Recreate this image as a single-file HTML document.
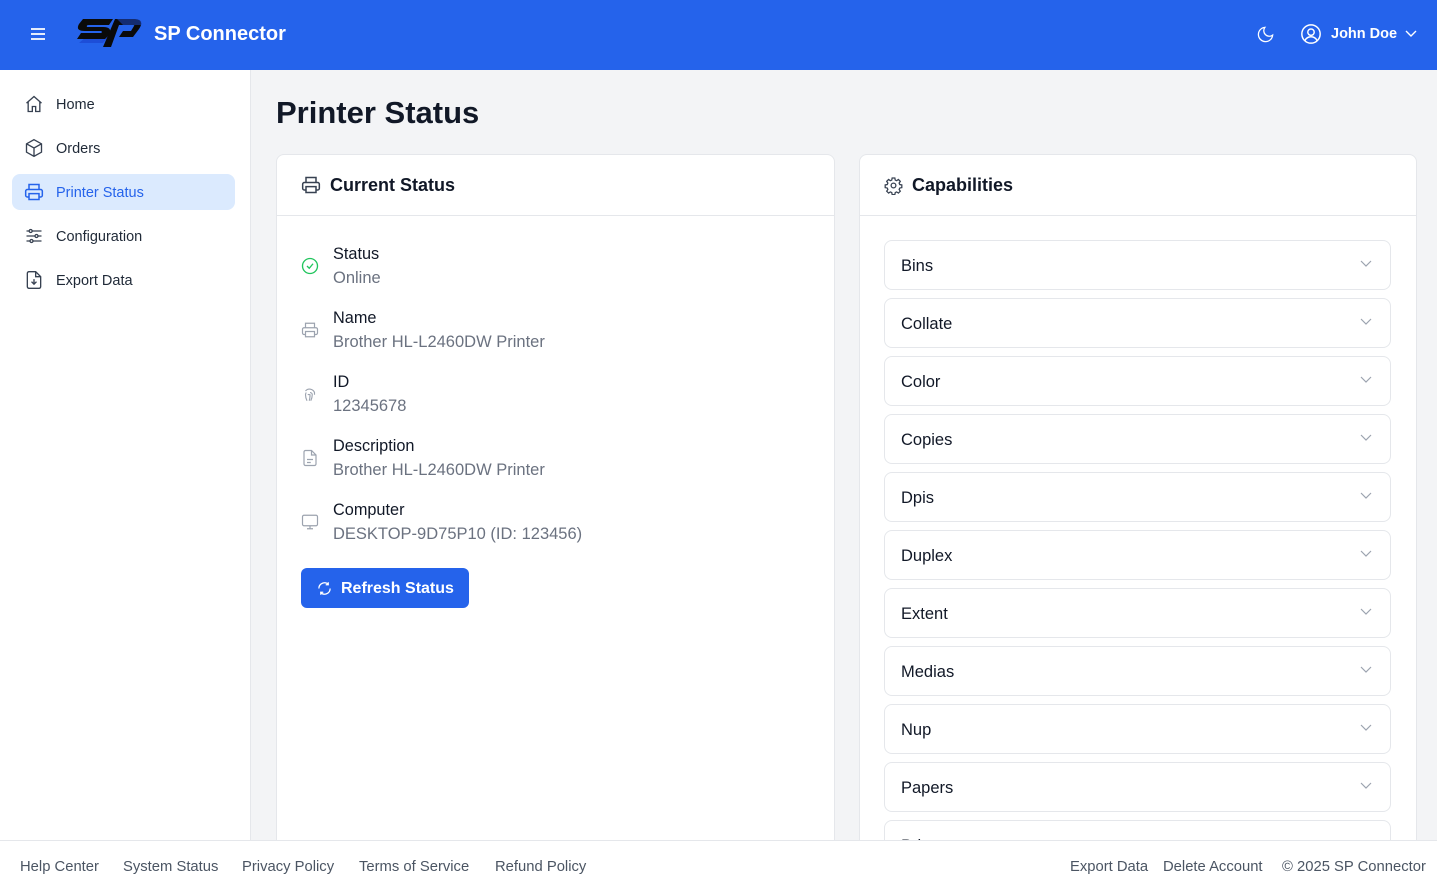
<!DOCTYPE html>
<html><head><meta charset="utf-8">
<style>
*{box-sizing:border-box;margin:0;padding:0}
body{width:1437px;height:888px;overflow:hidden;background:#f3f4f6;font-family:"Liberation Sans",sans-serif;color:#111827;position:relative}
.top{position:absolute;left:0;top:0;width:1437px;height:70px;background:#2563eb;color:#fff}
.side{position:absolute;left:0;top:70px;width:251px;height:770px;background:#fff;border-right:1px solid #e5e7eb}
.nav{position:absolute;left:12px;width:223px;height:36px;border-radius:8px;display:flex;align-items:center;padding-left:12px;font-size:14.5px;color:#1f2937;padding-top:2px}
.nav svg{margin-right:12px;margin-top:-2px}
.nav.act{background:#dbeafe;color:#2563eb}
.card{position:absolute;top:154px;background:#fff;border:1px solid #e5e7eb;border-radius:8px 8px 0 0;height:700px}
.ch{height:61px;border-bottom:1px solid #e5e7eb;display:flex;align-items:center;padding-left:24px;font-size:18px;font-weight:bold}
.ch svg{margin-right:9px}
.row{position:absolute;left:24px}
.row svg{position:absolute;left:0;top:12px}
.row .l{position:absolute;left:32px;top:0;font-size:16.3px;color:#111827;white-space:nowrap}
.row .v{position:absolute;left:32px;top:24px;font-size:16.5px;color:#6b7280;white-space:nowrap}
.acc{position:absolute;left:24px;width:507px;height:50px;border:1px solid #e5e7eb;border-radius:8px;font-size:16.5px;display:flex;align-items:center;padding-left:16px;padding-top:3px;color:#111827}
.acc svg{position:absolute;right:18px;top:19px}
.foot{position:absolute;left:0;top:840px;width:1437px;height:48px;background:#fff;border-top:1px solid #e5e7eb;font-size:14.8px;color:#4b5563}
.foot span{position:absolute;top:18px;white-space:nowrap}
</style></head><body>
<div class="top">
<svg style="position:absolute;left:30px;top:27px" width="16" height="14" viewBox="0 0 16 14"><path d="M1 2h14M1 7h14M1 12h14" stroke="#fff" stroke-width="1.8"/></svg>
<svg style="position:absolute;left:73px;top:17px" width="70" height="34" viewBox="0 0 70 34">
<path d="M6 26 L30 26 L36 19 L14 19 Z" fill="#1d4ed8"/>
<path d="M10 2 L40 2 L36 8 L16 8 Q13 8 14 10 L30 10 Q40 10 36 18 L32 22 L4 22 L8 16 L28 16 Q30 15 28 14 L12 14 Q2 14 6 7 Z" fill="#0a0a0a"/>
<path d="M42 2 L62 2 Q72 3 66 12 L60 20 L46 20 L50 14 L58 14 L61 9 Q62 8 60 8 L46 8 L38 30 L30 30 Z" fill="#0a0a0a"/>
<path d="M44 2 L64 2 Q70 3 68 8 L50 8 Z" fill="#1d4ed8" opacity=".5"/>
</svg>
<div style="position:absolute;left:154px;top:23px;font-size:20px;font-weight:bold">SP Connector</div>
<svg style="position:absolute;left:1256px;top:25px" width="19" height="19" viewBox="0 0 24 24" fill="none" stroke="#fff" stroke-width="1.6"><path d="M21 12.8A9 9 0 1 1 11.2 3a7 7 0 0 0 9.8 9.8z"/></svg>
<svg style="position:absolute;left:1300px;top:23px" width="22" height="22" viewBox="0 0 24 24" fill="none" stroke="#fff" stroke-width="1.6"><circle cx="12" cy="12" r="10"/><circle cx="12" cy="10" r="3.5"/><path d="M5.5 19c1.5-3 4-4 6.5-4s5 1 6.5 4"/></svg>
<div style="position:absolute;left:1331px;top:26px;font-size:14.5px;font-weight:bold">John Doe</div>
<svg style="position:absolute;left:1405px;top:30px" width="12" height="8" viewBox="0 0 12 8" fill="none" stroke="#fff" stroke-width="1.4"><path d="M1 1l5 5 5-5"/></svg>
</div>
<div class="side">
<div class="nav" style="top:16px"><svg width="20" height="20" viewBox="0 0 24 24" fill="none" stroke="#374151" stroke-width="1.6"><path d="M3 11l9-8 9 8M5 9.5V21h5v-6h4v6h5V9.5"/></svg>Home</div>
<div class="nav" style="top:60px"><svg width="20" height="20" viewBox="0 0 24 24" fill="none" stroke="#374151" stroke-width="1.6"><path d="M12 2l9 5v10l-9 5-9-5V7z M3 7l9 5 9-5 M12 12v10"/></svg>Orders</div>
<div class="nav act" style="top:104px"><svg width="20" height="20" viewBox="0 0 24 24" fill="none" stroke="#2563eb" stroke-width="1.8"><path d="M6 9V3h12v6M6 18H4a2 2 0 0 1-2-2v-5a2 2 0 0 1 2-2h16a2 2 0 0 1 2 2v5a2 2 0 0 1-2 2h-2M6 14h12v7H6z"/></svg>Printer Status</div>
<div class="nav" style="top:148px"><svg width="20" height="20" viewBox="0 0 24 24" fill="none" stroke="#374151" stroke-width="1.6"><path d="M3 6h18M3 12h18M3 18h18"/><circle cx="8" cy="6" r="1.8" fill="#fff"/><circle cx="15" cy="12" r="1.8" fill="#fff"/><circle cx="9" cy="18" r="1.8" fill="#fff"/></svg>Configuration</div>
<div class="nav" style="top:192px"><svg width="20" height="20" viewBox="0 0 24 24" fill="none" stroke="#374151" stroke-width="1.6"><path d="M14 2H6a2 2 0 0 0-2 2v16a2 2 0 0 0 2 2h12a2 2 0 0 0 2-2V8z M14 2v6h6 M12 11v6 M9 14l3 3 3-3"/></svg>Export Data</div>
</div>
<div style="position:absolute;left:276px;top:95px;font-size:31px;font-weight:bold">Printer Status</div>
<div class="card" style="left:276px;width:559px">
<div class="ch"><svg width="20" height="20" viewBox="0 0 24 24" fill="none" stroke="#374151" stroke-width="1.8"><path d="M6 9V3h12v6M6 18H4a2 2 0 0 1-2-2v-5a2 2 0 0 1 2-2h16a2 2 0 0 1 2 2v5a2 2 0 0 1-2 2h-2M6 14h12v7H6z"/></svg>Current Status</div>
<div class="row" style="top:90px"><svg width="18" height="18" viewBox="0 0 24 24" fill="none" stroke="#22c55e" stroke-width="1.8"><circle cx="12" cy="12" r="10"/><path d="M8 12l3 3 5-6"/></svg><div class="l">Status</div><div class="v">Online</div></div>
<div class="row" style="top:154px"><svg width="18" height="18" viewBox="0 0 24 24" fill="none" stroke="#9ca3af" stroke-width="1.6"><path d="M6 9V3h12v6M6 18H4a2 2 0 0 1-2-2v-5a2 2 0 0 1 2-2h16a2 2 0 0 1 2 2v5a2 2 0 0 1-2 2h-2M6 14h12v7H6z"/></svg><div class="l">Name</div><div class="v">Brother HL-L2460DW Printer</div></div>
<div class="row" style="top:218px"><svg width="18" height="18" viewBox="0 0 24 24" fill="none" stroke="#9ca3af" stroke-width="1.5"><path d="M6 8a7 7 0 0 1 12 2v3M8 21c-1-2-2-5-2-8a6 6 0 0 1 1-3M12 10a3 3 0 0 1 3 3c0 3-1 6-2 8M9 13a3 3 0 0 1 3-0c0 3 0 5-1 8M12 13v3"/></svg><div class="l">ID</div><div class="v">12345678</div></div>
<div class="row" style="top:282px"><svg width="18" height="18" viewBox="0 0 24 24" fill="none" stroke="#9ca3af" stroke-width="1.6"><path d="M14 2H6a2 2 0 0 0-2 2v16a2 2 0 0 0 2 2h12a2 2 0 0 0 2-2V8z M14 2v6h6 M8 14h8M8 18h5"/></svg><div class="l">Description</div><div class="v">Brother HL-L2460DW Printer</div></div>
<div class="row" style="top:346px"><svg width="18" height="18" viewBox="0 0 24 24" fill="none" stroke="#9ca3af" stroke-width="1.6"><rect x="2" y="3" width="20" height="14" rx="2"/><path d="M8 21h8M12 17v4"/></svg><div class="l">Computer</div><div class="v">DESKTOP-9D75P10 (ID: 123456)</div></div>
<div style="position:absolute;left:24px;top:413px;width:168px;height:40px;background:#2563eb;border-radius:6px;color:#fff;font-size:16px;font-weight:bold;display:flex;align-items:center;padding-left:16px;padding-top:2px"><svg style="margin-right:9px;margin-top:-2px" width="15" height="15" viewBox="0 0 24 24" fill="none" stroke="#fff" stroke-width="2"><path d="M21 12a9 9 0 0 1-15.5 6.3M3 12a9 9 0 0 1 15.5-6.3M18 2v4h-4M6 22v-4h4"/></svg>Refresh Status</div>
</div>
<div class="card" style="left:859px;width:558px">
<div class="ch"><svg width="19" height="19" viewBox="0 0 24 24" fill="none" stroke="#374151" stroke-width="1.6"><circle cx="12" cy="12" r="3"/><path d="M10.3 2.5h3.4l.5 2.6 1.8.8 2.2-1.5 2.4 2.4-1.5 2.2.8 1.8 2.6.5v3.4l-2.6.5-.8 1.8 1.5 2.2-2.4 2.4-2.2-1.5-1.8.8-.5 2.6h-3.4l-.5-2.6-1.8-.8-2.2 1.5-2.4-2.4 1.5-2.2-.8-1.8-2.6-.5v-3.4l2.6-.5.8-1.8-1.5-2.2 2.4-2.4 2.2 1.5 1.8-.8z"/></svg>Capabilities</div>
<div class="acc" style="top:85px">Bins<svg width="12" height="8" viewBox="0 0 12 8" fill="none" stroke="#9ca3af" stroke-width="1.2"><path d="M1 1l5 5 5-5"/></svg></div>
<div class="acc" style="top:143px">Collate<svg width="12" height="8" viewBox="0 0 12 8" fill="none" stroke="#9ca3af" stroke-width="1.2"><path d="M1 1l5 5 5-5"/></svg></div>
<div class="acc" style="top:201px">Color<svg width="12" height="8" viewBox="0 0 12 8" fill="none" stroke="#9ca3af" stroke-width="1.2"><path d="M1 1l5 5 5-5"/></svg></div>
<div class="acc" style="top:259px">Copies<svg width="12" height="8" viewBox="0 0 12 8" fill="none" stroke="#9ca3af" stroke-width="1.2"><path d="M1 1l5 5 5-5"/></svg></div>
<div class="acc" style="top:317px">Dpis<svg width="12" height="8" viewBox="0 0 12 8" fill="none" stroke="#9ca3af" stroke-width="1.2"><path d="M1 1l5 5 5-5"/></svg></div>
<div class="acc" style="top:375px">Duplex<svg width="12" height="8" viewBox="0 0 12 8" fill="none" stroke="#9ca3af" stroke-width="1.2"><path d="M1 1l5 5 5-5"/></svg></div>
<div class="acc" style="top:433px">Extent<svg width="12" height="8" viewBox="0 0 12 8" fill="none" stroke="#9ca3af" stroke-width="1.2"><path d="M1 1l5 5 5-5"/></svg></div>
<div class="acc" style="top:491px">Medias<svg width="12" height="8" viewBox="0 0 12 8" fill="none" stroke="#9ca3af" stroke-width="1.2"><path d="M1 1l5 5 5-5"/></svg></div>
<div class="acc" style="top:549px">Nup<svg width="12" height="8" viewBox="0 0 12 8" fill="none" stroke="#9ca3af" stroke-width="1.2"><path d="M1 1l5 5 5-5"/></svg></div>
<div class="acc" style="top:607px">Papers<svg width="12" height="8" viewBox="0 0 12 8" fill="none" stroke="#9ca3af" stroke-width="1.2"><path d="M1 1l5 5 5-5"/></svg></div>
<div class="acc" style="top:665px">Printrate<svg width="12" height="8" viewBox="0 0 12 8" fill="none" stroke="#9ca3af" stroke-width="1.2"><path d="M1 1l5 5 5-5"/></svg></div>
</div>
<div class="foot">
<span style="left:20px">Help Center</span><span style="left:123px">System Status</span><span style="left:242px">Privacy Policy</span><span style="left:359px">Terms of Service</span><span style="left:495px">Refund Policy</span>
<span style="left:1070px">Export Data</span><span style="left:1163px">Delete Account</span><span style="left:1282px">© 2025 SP Connector</span>
</div>
</body></html>
